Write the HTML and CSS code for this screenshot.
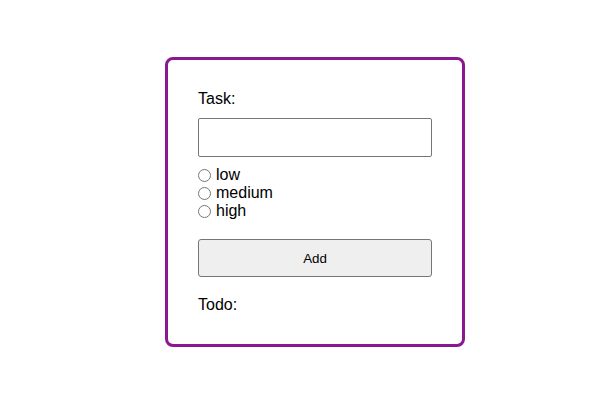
FILE: index.html
```html
<!DOCTYPE html>
<html>
<head>
<meta charset="utf-8">
<link rel="stylesheet" href="styles.css">
</head>
<body>
<div class="card">
  <div class="label">Task:</div>
  <input class="task" type="text">
  <div class="radios">
    <label class="opt"><input type="radio" name="p"><span>low</span></label>
    <label class="opt"><input type="radio" name="p"><span>medium</span></label>
    <label class="opt"><input type="radio" name="p"><span>high</span></label>
  </div>
  <button class="add">Add</button>
  <div class="label">Todo:</div>
</div>
</body>
</html>
```
FILE: styles.css
```css
html, body {
  margin: 0;
  background: #fff;
}
body {
  padding: 57px 0 0 165px;
  font-family: "Liberation Sans", Arial, sans-serif;
  font-size: 16px;
  color: #000;
}
.card {
  box-sizing: border-box;
  width: 300px;
  height: 290px;
  border: 3px solid #8b1890;
  border-radius: 8px;
  padding: 30px;
  display: flex;
  flex-direction: column;
}
.label {
  line-height: 18px;
  height: 18px;
}
.task {
  box-sizing: border-box;
  margin: 10px 0 0 0;
  width: 234px;
  height: 39px;
  border: 1px solid #767676;
  border-radius: 2px;
  padding: 0 4px;
  font: inherit;
}
.radios {
  margin-top: 9px;
  display: flex;
  flex-direction: column;
}
.opt {
  display: flex;
  align-items: center;
  height: 18px;
  line-height: 18px;
}
.opt input {
  margin: 0 5px 0 0;
  width: 13px;
  height: 13px;
}
.add {
  box-sizing: border-box;
  margin: 19px 0 19px 0;
  width: 234px;
  height: 38px;
  border: 1px solid #767676;
  border-radius: 3px;
  background: #efefef;
  font-family: "Liberation Sans", Arial, sans-serif;
  font-size: 13.33px;
  color: #000;
}
```
